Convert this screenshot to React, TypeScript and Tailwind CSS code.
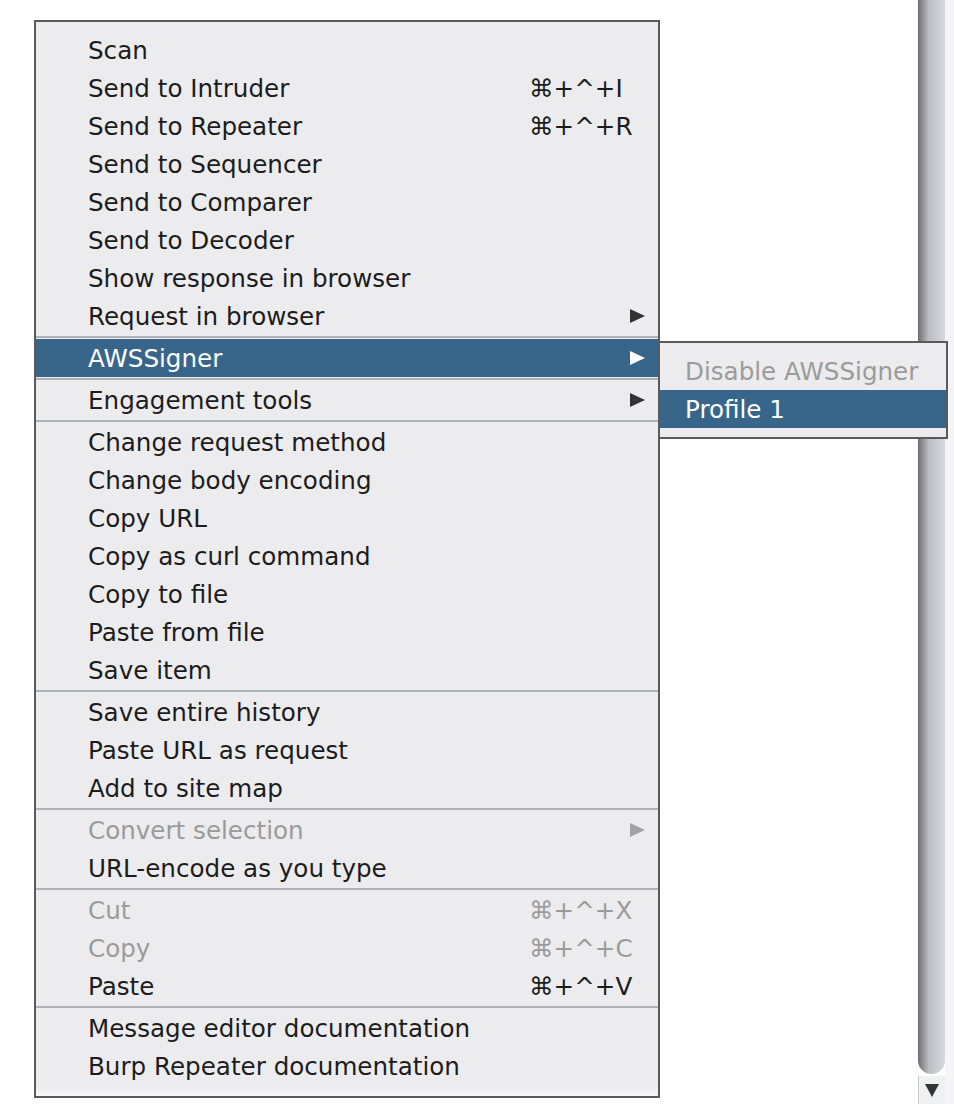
import React from "react";

type Item = {
  label: string;
  shortcut?: string;
  sub?: boolean;
  disabled?: boolean;
  active?: boolean;
};

// null marks a separator
const items: (Item | null)[] = [
  { label: "Scan" },
  { label: "Send to Intruder", shortcut: "⌘+^+I" },
  { label: "Send to Repeater", shortcut: "⌘+^+R" },
  { label: "Send to Sequencer" },
  { label: "Send to Comparer" },
  { label: "Send to Decoder" },
  { label: "Show response in browser" },
  { label: "Request in browser", sub: true },
  null,
  { label: "AWSSigner", sub: true, active: true },
  null,
  { label: "Engagement tools", sub: true },
  null,
  { label: "Change request method" },
  { label: "Change body encoding" },
  { label: "Copy URL" },
  { label: "Copy as curl command" },
  { label: "Copy to file" },
  { label: "Paste from file" },
  { label: "Save item" },
  null,
  { label: "Save entire history" },
  { label: "Paste URL as request" },
  { label: "Add to site map" },
  null,
  { label: "Convert selection", sub: true, disabled: true },
  { label: "URL-encode as you type" },
  null,
  { label: "Cut", shortcut: "⌘+^+X", disabled: true },
  { label: "Copy", shortcut: "⌘+^+C", disabled: true },
  { label: "Paste", shortcut: "⌘+^+V" },
  null,
  { label: "Message editor documentation" },
  { label: "Burp Repeater documentation" },
];

const Arrow = ({ color }: { color: string }) => (
  <svg width="15" height="14" viewBox="0 0 15 14">
    <polygon points="0,0 15,7 0,14" fill={color} />
  </svg>
);

const Separator = () => (
  <div className="h-[4px] flex flex-col justify-center">
    <div className="h-[2px] bg-[#aeb1b6]" />
  </div>
);

const Row = ({ item }: { item: Item }) => {
  const text = item.active
    ? "text-white"
    : item.disabled
    ? "text-[#9b9b9b]"
    : "text-[#1c1c1c]";
  const arrowColor = item.active ? "#ffffff" : item.disabled ? "#a2a2a2" : "#333333";
  return (
    <div
      className={`h-[38px] flex items-center pl-[52px] pr-[13px] ${
        item.active ? "bg-[#38668a]" : ""
      } ${text}`}
    >
      <span className="w-[441px] shrink-0 whitespace-nowrap pt-[2px]">{item.label}</span>
      <span className="whitespace-nowrap pt-[2px]">{item.shortcut}</span>
      {item.sub && (
        <span className="ml-auto flex items-center">
          <Arrow color={arrowColor} />
        </span>
      )}
    </div>
  );
};

export default function App() {
  return (
    <div
      className="relative w-[954px] h-[1104px] bg-white overflow-hidden flex text-[24.6px] leading-none"
      style={{ fontFamily: '"DejaVu Sans", "Liberation Sans", sans-serif' }}
    >
      {/* page behind the menu */}
      <div className="flex-1 bg-white" />
      <div className="w-[27px] flex flex-col">
        <div className="flex-1 rounded-b-[14px] bg-gradient-to-r from-[#6e6e72] via-[#bdbec3] via-40% to-[#d6d8de]" />
        <div className="h-[28px] mt-[2px] bg-[#f0f1f3] flex items-center justify-center border-l border-[#c9cacd]">
          <svg width="14" height="13" viewBox="0 0 14 13">
            <polygon points="0,0 14,0 7,13" fill="#333" />
          </svg>
        </div>
      </div>
      <div className="w-[9px] bg-[#f5f5f7]" />

      {/* main popup menu */}
      <div className="absolute left-[34px] top-[20px] w-[626px] border-2 border-[#5a5a5a] bg-[#ececef]">
        <div className="h-[9px]" />
        {items.map((item, i) =>
          item ? <Row key={i} item={item} /> : <Separator key={i} />
        )}
        <div className="h-[11px] bg-gradient-to-b from-[#ececef] to-[#f7f7f9]" />
      </div>

      {/* AWSSigner submenu */}
      <div className="absolute left-[658px] top-[341px] w-[290px] border-2 border-[#5a5a5a] bg-[#ececef]">
        <div className="h-[9px]" />
        <div className="h-[38px] flex items-center pl-[25px] pt-[2px] text-[#9b9b9b] whitespace-nowrap">
          Disable AWSSigner
        </div>
        <div className="h-[38px] flex items-center pl-[25px] pt-[2px] bg-[#38668a] text-white whitespace-nowrap">
          Profile 1
        </div>
        <div className="h-[9px]" />
      </div>
    </div>
  );
}
